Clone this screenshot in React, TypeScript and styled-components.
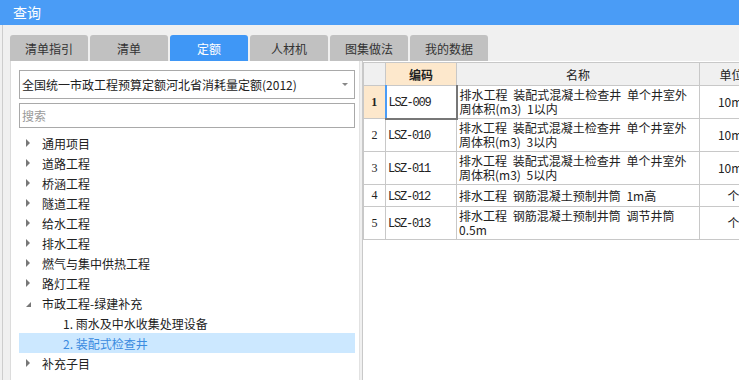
import styled, { createGlobalStyle } from "styled-components";

// <styled>
const GlobalStyle = createGlobalStyle`
  body {
    margin: 0;
    background: #f0f0f0;
    font-family: "Noto Sans CJK SC", "Noto Sans", sans-serif;
    color: #222;
  }
`;

const Window = styled.div`
  width: 739px;
  height: 380px;
  display: flex;
  flex-direction: column;
  overflow: hidden;
`;

const TitleBar = styled.div`
  height: 25px;
  flex: none;
  background: #4a9cf6;
  color: #fff;
  font-size: 14px;
  line-height: 25px;
  padding-left: 13px;
`;

const Main = styled.div`
  flex: 1;
  display: flex;
  flex-direction: column;
  min-height: 0;
  padding: 10px 0 0 10px;
  background: linear-gradient(
    to right,
    #f0f0f0 2px,
    #cdcdcd 2px,
    #cdcdcd 3px,
    #f0f0f0 3px
  );
`;

const TabBar = styled.div`
  display: flex;
  gap: 2px;
  height: 26px;
  flex: none;
`;

const Tab = styled.div<{ $active?: boolean }>`
  width: 78px;
  border-radius: 3px 3px 0 0;
  background: ${(p) => (p.$active ? "#3f97f6" : "#c1c1c1")};
  color: ${(p) => (p.$active ? "#fff" : "#333")};
  font-size: 12px;
  line-height: 27px;
  text-align: center;
`;

const Body = styled.div`
  flex: 1;
  display: flex;
  min-height: 0;
  background: #fff;
`;

const LeftPanel = styled.div`
  width: 336px;
  flex: none;
  padding: 9px 4px 0 8px;
  border-left: 1px solid #dcdcdc;
  border-right: 1px solid #e2e2e2;
  display: flex;
  flex-direction: column;
`;

const Splitter = styled.div`
  width: 2px;
  flex: none;
  background: #f0f0f0;
  border-right: 1px solid #c9c9c9;
`;

const Select = styled.div`
  height: 27px;
  border: 1px solid #a9a9a9;
  display: flex;
  align-items: center;
  justify-content: space-between;
  padding: 0 6px 0 2px;
  font-size: 12px;
`;

const Caret = styled.span`
  width: 0;
  height: 0;
  border-left: 3px solid transparent;
  border-right: 3px solid transparent;
  border-top: 3px solid #888;
`;

const Search = styled.input`
  margin-top: 4px;
  height: 25px;
  box-sizing: border-box;
  border: 1px solid #a9a9a9;
  padding: 0 2px;
  font-family: inherit;
  font-size: 12px;
  outline: none;
  &::placeholder {
    color: #9a9a9a;
  }
`;

const Tree = styled.div`
  margin-top: 5px;
  display: flex;
  flex-direction: column;
`;

const Node = styled.div<{ $selected?: boolean; $level?: number }>`
  height: 20px;
  display: flex;
  align-items: center;
  padding-left: ${(p) => (p.$level ? 44 : 7)}px;
  font-size: 12px;
  color: ${(p) => (p.$selected ? "#3a8be0" : "#222")};
  background: ${(p) => (p.$selected ? "#cce8ff" : "transparent")};
`;

const Arrow = styled.span<{ $open?: boolean }>`
  width: 16px;
  flex: none;
  display: flex;
  &::before {
    content: "";
    width: 0;
    height: 0;
    ${(p) =>
      p.$open
        ? `border-left: 5px solid transparent; border-bottom: 5px solid #777; margin-top: 2px;`
        : `border-top: 4px solid transparent; border-bottom: 4px solid transparent; border-left: 4px solid #777;`}
  }
`;

const GridWrap = styled.div`
  flex: 1;
  overflow: hidden;
  padding-top: 1px;
`;

const Table = styled.table`
  border-collapse: collapse;
  table-layout: fixed;
  width: 400px;
  font-size: 12px;
`;

const Th = styled.th<{ $hot?: boolean }>`
  height: 22px;
  padding: 0;
  border: 1px solid #c8c8c8;
  background: ${(p) => (p.$hot ? "#fde8cc" : "#f0f0f0")};
  font-weight: ${(p) => (p.$hot ? 700 : 400)};
  text-align: center;
`;

const NumCell = styled.td<{ $hot?: boolean }>`
  border: 1px solid #c8c8c8;
  background: ${(p) => (p.$hot ? "#fde8cc" : "#fff")};
  font-weight: ${(p) => (p.$hot ? 700 : 400)};
  font-family: "Liberation Serif", serif;
  text-align: center;
  padding: 0;
`;

const Td = styled.td<{ $focus?: boolean; $center?: boolean }>`
  height: 17px;
  border: 1px solid #c8c8c8;
  padding: 2px 12px 2px 2px;
  line-height: 14px;
  word-spacing: 3px;
  vertical-align: middle;
  text-align: ${(p) => (p.$center ? "center" : "left")};
  ${(p) => p.$center && `padding: 2px 0 2px 4px;`}
  ${(p) =>
    p.$focus &&
    `border-left: 2px solid #4a9cf6; border-right: 2px solid #777; border-bottom: 2px solid #777;`}
`;

const Code = styled.span`
  font-family: "Liberation Mono", monospace;
  font-size: 12px;
  letter-spacing: -1.2px;
`;
// </styled>

interface Row {
  code: string;
  name: string;
  unit: string;
}

const tabs = ["清单指引", "清单", "定额", "人材机", "图集做法", "我的数据"];

const rows: Row[] = [
  { code: "LSZ-009", name: "排水工程 装配式混凝土检查井 单个井室外周体积(m3) 1以内", unit: "10m3" },
  { code: "LSZ-010", name: "排水工程 装配式混凝土检查井 单个井室外周体积(m3) 3以内", unit: "10m3" },
  { code: "LSZ-011", name: "排水工程 装配式混凝土检查井 单个井室外周体积(m3) 5以内", unit: "10m3" },
  { code: "LSZ-012", name: "排水工程 钢筋混凝土预制井筒 1m高", unit: "个" },
  { code: "LSZ-013", name: "排水工程 钢筋混凝土预制井筒 调节井筒 0.5m", unit: "个" },
];

const roots = [
  "通用项目",
  "道路工程",
  "桥涵工程",
  "隧道工程",
  "给水工程",
  "排水工程",
  "燃气与集中供热工程",
  "路灯工程",
];

function App() {
  return (
    <Window>
      <GlobalStyle />
      <TitleBar>查询</TitleBar>
      <Main>
        <TabBar>
          {tabs.map((t) => (
            <Tab key={t} $active={t === "定额"}>
              {t}
            </Tab>
          ))}
        </TabBar>
        <Body>
          <LeftPanel>
            <Select>
              全国统一市政工程预算定额河北省消耗量定额(2012)
              <Caret />
            </Select>
            <Search placeholder="搜索" />
            <Tree>
              {roots.map((r) => (
                <Node key={r}>
                  <Arrow />
                  {r}
                </Node>
              ))}
              <Node>
                <Arrow $open />
                市政工程-绿建补充
              </Node>
              <Node $level={1}>1. 雨水及中水收集处理设备</Node>
              <Node $level={1} $selected>
                2. 装配式检查井
              </Node>
              <Node>
                <Arrow />
                补充子目
              </Node>
            </Tree>
          </LeftPanel>
          <Splitter />
          <GridWrap>
            <Table>
              <colgroup>
                <col style={{ width: 22 }} />
                <col style={{ width: 71 }} />
                <col style={{ width: 243 }} />
                <col style={{ width: 64 }} />
              </colgroup>
              <thead>
                <tr>
                  <Th />
                  <Th $hot>编码</Th>
                  <Th>名称</Th>
                  <Th>单位</Th>
                </tr>
              </thead>
              <tbody>
                {rows.map((r, i) => (
                  <tr key={r.code}>
                    <NumCell $hot={i === 0}>{i + 1}</NumCell>
                    <Td $focus={i === 0}>
                      <Code>{r.code}</Code>
                    </Td>
                    <Td>{r.name}</Td>
                    <Td $center>{r.unit}</Td>
                  </tr>
                ))}
              </tbody>
            </Table>
          </GridWrap>
        </Body>
      </Main>
    </Window>
  );
}

export default App;
